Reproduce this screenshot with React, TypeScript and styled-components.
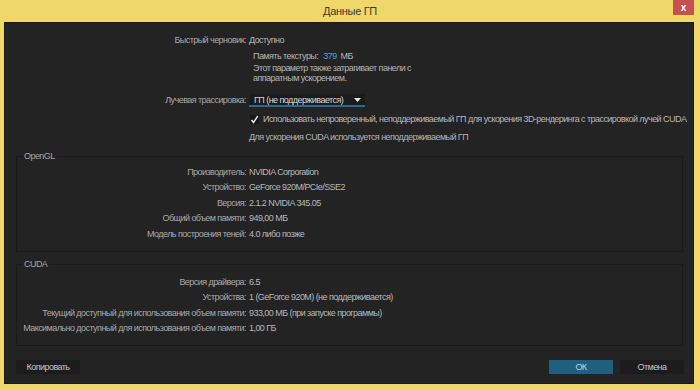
import React from "react";
import styled, { createGlobalStyle } from "styled-components";

const GlobalStyle = createGlobalStyle`
  html, body {
    margin: 0;
    padding: 0;
    background: #efd76b;
  }
  * {
    box-sizing: border-box;
  }
`;

const UI_FONT = `"Liberation Sans", Arial, sans-serif`;

const Window = styled.div`
  width: 700px;
  height: 390px;
  background: #efd76b;
  display: flex;
  flex-direction: column;
  font-family: ${UI_FONT};
  font-size: 9px;
  letter-spacing: -0.55px;
  color: #b4b4b4;
  overflow: hidden;
`;

const TitleBar = styled.div`
  height: 22px;
  display: grid;
  grid-template-columns: 1fr auto 1fr;
  align-items: start;
`;

const Title = styled.div`
  font-size: 11px;
  letter-spacing: -0.3px;
  line-height: 23px;
  color: #3c3a2a;
`;

const CloseButton = styled.div`
  justify-self: end;
  margin-right: 6px;
  width: 21px;
  height: 15px;
  background: #c75050;
  color: #fff;
  font-weight: bold;
  font-size: 10px;
  letter-spacing: 0;
  line-height: 15px;
  text-align: center;
`;

const Content = styled.div`
  flex: 1;
  margin: 0 6px 6px 4px;
  background: #232323;
  border: 1px solid #1b1b1b;
  display: flex;
  flex-direction: column;
`;

const TopSection = styled.div`
  padding-top: 10px;
  display: flex;
  flex-direction: column;
`;

const Row = styled.div<{ $mt?: number }>`
  display: grid;
  grid-template-columns: 241px 1fr;
  column-gap: 3px;
  align-items: center;
  height: 14px;
  margin-top: ${(p) => p.$mt ?? 0}px;
  white-space: nowrap;
`;

const Label = styled.div`
  text-align: right;
  color: #a9a9a9;
`;

const Value = styled.div`
  color: #b8b8b8;
`;

const Indented = styled.div<{ $ml: number; $mt?: number }>`
  margin-left: ${(p) => p.$ml}px;
  margin-top: ${(p) => p.$mt ?? 0}px;
  color: #b4b4b4;
  white-space: nowrap;
`;

const Line = styled.div`
  height: 14px;
  line-height: 14px;
`;

const Blue = styled.span`
  color: #4aa0e2;
  margin: 0 4px 0 5px;
`;

const Note = styled.div`
  line-height: 10px;
`;

const Select = styled.div`
  width: 116px;
  height: 13px;
  background: #1b1b1b;
  border-bottom: 2px solid #2b6a8e;
  display: flex;
  align-items: center;
  justify-content: space-between;
  padding: 1px 4px 0 5px;
  color: #dadada;
`;

const CheckRow = styled.div<{ $mt?: number }>`
  display: flex;
  align-items: center;
  gap: 4px;
  margin-left: 245px;
  margin-top: ${(p) => p.$mt ?? 0}px;
  height: 14px;
  color: #b8b8b8;
  white-space: nowrap;
`;

const CheckBox = styled.div`
  width: 9px;
  height: 9px;
  background: #171717;
  display: flex;
  align-items: center;
  justify-content: center;
`;

const Group = styled.div<{ $h: number; $mt: number }>`
  margin: ${(p) => p.$mt}px 10px 0 11px;
  height: ${(p) => p.$h}px;
  border: 1px solid #1a1a1a;
  display: flex;
  flex-direction: column;
`;

const GroupTitle = styled.div`
  align-self: flex-start;
  margin: -6px 0 0 5px;
  padding: 0 2px;
  height: 11px;
  line-height: 11px;
  background: #232323;
  color: #a4a4a4;
`;

const GroupRows = styled.div<{ $mt: number }>`
  margin-top: ${(p) => p.$mt}px;
  display: flex;
  flex-direction: column;
`;

const GroupRow = styled.div`
  display: grid;
  grid-template-columns: 229px 1fr;
  column-gap: 3px;
  height: 15.5px;
  align-items: center;
  white-space: nowrap;
`;

const Footer = styled.div`
  margin-top: auto;
  margin-bottom: 9px;
  height: 14px;
  padding: 0 9px 0 11px;
  display: flex;
  align-items: center;
  gap: 7px;
`;

const Button = styled.div<{ $primary?: boolean }>`
  width: 64px;
  height: 14px;
  background: ${(p) => (p.$primary ? "#1f5f80" : "#1c1c1c")};
  color: ${(p) => (p.$primary ? "#c8d4dc" : "#c4c4c4")};
  display: flex;
  align-items: center;
  justify-content: center;
`;

const Spacer = styled.div`
  flex: 1;
`;

const openGl: [string, string][] = [
  ["Производитель:", "NVIDIA Corporation"],
  ["Устройство:", "GeForce 920M/PCIe/SSE2"],
  ["Версия:", "2.1.2 NVIDIA 345.05"],
  ["Общий объем памяти:", "949,00 МБ"],
  ["Модель построения теней:", "4.0 либо позже"],
];

const cuda: [string, string][] = [
  ["Версия драйвера:", "6.5"],
  ["Устройства:", "1 (GeForce 920M) (не поддерживается)"],
  ["Текущий доступный для использования объем памяти:", "933,00 МБ (при запуске программы)"],
  ["Максимально доступный для использования объем памяти:", "1,00 ГБ"],
];

export default function App() {
  return (
    <>
      <GlobalStyle />
      <Window>
        <TitleBar>
          <div />
          <Title>Данные ГП</Title>
          <CloseButton>x</CloseButton>
        </TitleBar>
        <Content>
          <TopSection>
            <Row>
              <Label>Быстрый черновик:</Label>
              <Value>Доступно</Value>
            </Row>
            <Indented $ml={248} $mt={2}>
              <Line>
                Память текстуры:<Blue>379</Blue>МБ
              </Line>
              <Note>
                Этот параметр также затрагивает панели с
                <br />
                аппаратным ускорением.
              </Note>
            </Indented>
            <Row $mt={10}>
              <Label>Лучевая трассировка:</Label>
              <Select>
                <span>ГП (не поддерживается)</span>
                <svg width="7" height="4" viewBox="0 0 7 4">
                  <path d="M0 0 L7 0 L3.5 4 Z" fill="#e8e8e8" />
                </svg>
              </Select>
            </Row>
            <CheckRow $mt={5}>
              <CheckBox>
                <svg width="9" height="9" viewBox="0 0 9 9">
                  <path d="M1.5 5 L3.5 7.5 L7.8 1" stroke="#f0f0f0" strokeWidth="1.4" fill="none" />
                </svg>
              </CheckBox>
              <span>
                Использовать непроверенный, неподдерживаемый ГП для ускорения 3D-рендеринга с трассировкой лучей CUDA
              </span>
            </CheckRow>
            <Indented $ml={244} $mt={4}>
              <Line>Для ускорения CUDA используется неподдерживаемый ГП</Line>
            </Indented>
          </TopSection>

          <Group $h={96} $mt={12}>
            <GroupTitle>OpenGL</GroupTitle>
            <GroupRows $mt={2}>
              {openGl.map(([k, v]) => (
                <GroupRow key={k}>
                  <Label>{k}</Label>
                  <Value>{v}</Value>
                </GroupRow>
              ))}
            </GroupRows>
          </Group>

          <Group $h={82} $mt={12}>
            <GroupTitle>CUDA</GroupTitle>
            <GroupRows $mt={4}>
              {cuda.map(([k, v]) => (
                <GroupRow key={k}>
                  <Label>{k}</Label>
                  <Value>{v}</Value>
                </GroupRow>
              ))}
            </GroupRows>
          </Group>

          <Footer>
            <Button>Копировать</Button>
            <Spacer />
            <Button $primary>ОК</Button>
            <Button>Отмена</Button>
          </Footer>
        </Content>
      </Window>
    </>
  );
}
